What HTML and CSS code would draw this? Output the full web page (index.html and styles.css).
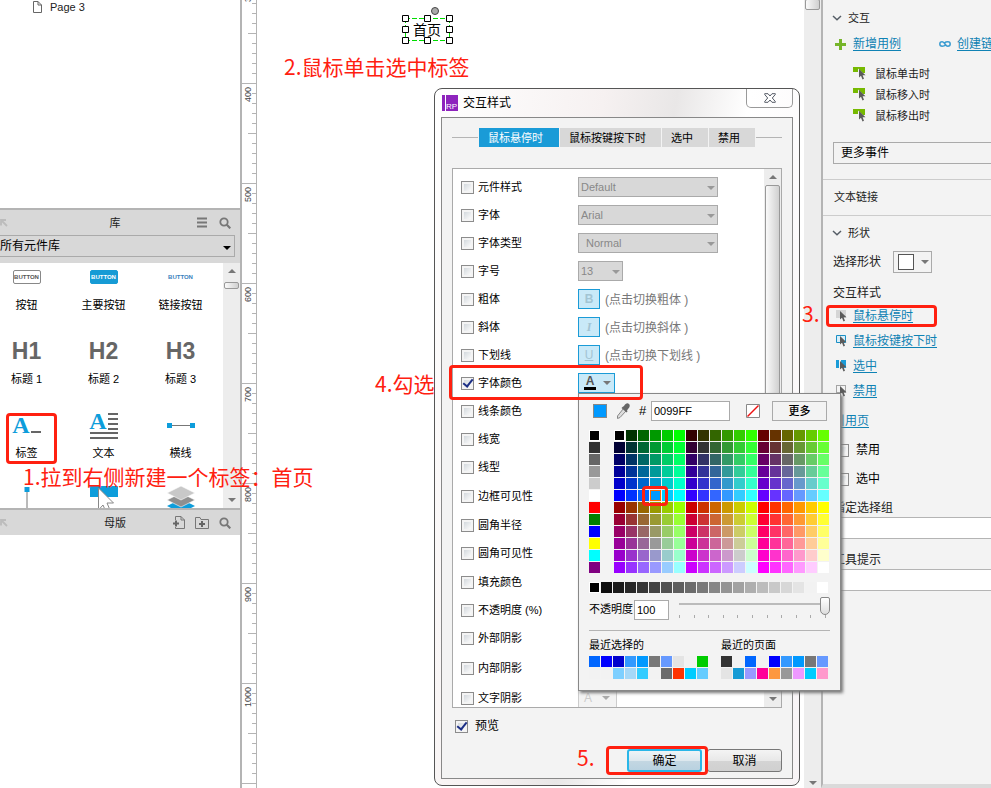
FILE: index.html
```html
<!DOCTYPE html>
<html lang="zh-CN">
<head>
<meta charset="utf-8">
<title>交互样式</title>
<link rel="stylesheet" href="styles.css">
</head>
<body>
<svg class="defs" aria-hidden="true">
  <symbol id="i-search" viewBox="0 0 12 12"><circle cx="5" cy="5" r="3.7" fill="none" stroke="#777" stroke-width="1.8"/><path d="M7.8 7.8 11.3 11.3" stroke="#777" stroke-width="2.2"/></symbol>
  <symbol id="i-dock" viewBox="0 0 8 8"><path d="M1 6.500V1H6M1.500 1.500 7 7" fill="none" stroke="#bcbcbc" stroke-width="1.800"/></symbol>
  <symbol id="i-chevron" viewBox="0 0 10 6"><path d="M1 1 5 4.700 9 1" fill="none" stroke="#555d66" stroke-width="1.500"/></symbol>
  <symbol id="i-pointer" viewBox="0 0 7 11"><path d="M0 0V8.500L2 6.800 3.500 10.500 5 9.800 3.600 6.300H6.500Z" fill="#5b5b5b"/></symbol>
  <symbol id="i-event" viewBox="0 0 13 13"><path d="M0 0H12V6H10L5 1.500V5H0Z" fill="#76b900"/><use href="#i-pointer" x="6" y="2" width="7" height="11"/></symbol>
</svg>
<div class="app">
  <aside class="left">
    <section class="pages">
      <div class="page-item"><svg width="10" height="12" viewBox="0 0 10 12"><path d="M1.500.5H6L9.500 4V11.500H1.500ZM6 .5V4H9.500" fill="#fff" stroke="#666"/></svg><span>Page 3</span></div>
    </section>
    <section class="library">
      <header class="pane-head">
        <svg class="dock" width="8" height="8"><use href="#i-dock"/></svg><h2>库</h2>
        <span class="tools"><svg width="10" height="11" viewBox="0 0 10 11"><path d="M0 1.500H10M0 5.500H10M0 9.500H10" stroke="#777" stroke-width="2"/></svg><svg width="12" height="12"><use href="#i-search"/></svg></span>
      </header>
      <div class="lib-select"><select aria-label="元件库"><option>所有元件库</option></select></div>
      <div class="lib-body">
        <div class="widgets">
          <figure><div class="ico"><span class="wb">BUTTON</span></div><figcaption>按钮</figcaption></figure>
          <figure><div class="ico"><span class="wb primary">BUTTON</span></div><figcaption>主要按钮</figcaption></figure>
          <figure><div class="ico"><span class="wb link">BUTTON</span></div><figcaption>链接按钮</figcaption></figure>
          <figure><div class="ico head">H1</div><figcaption>标题 1</figcaption></figure>
          <figure><div class="ico head">H2</div><figcaption>标题 2</figcaption></figure>
          <figure><div class="ico head">H3</div><figcaption>标题 3</figcaption></figure>
          <figure><div class="ico serif"><span>A</span><svg width="10" height="20" viewBox="0 0 10 20"><path d="M0 17H10" stroke="#666" stroke-width="2"/></svg></div><figcaption>标签</figcaption></figure>
          <figure><div class="ico text-ico"><div class="serif"><span>A</span><svg width="10" height="20" viewBox="0 0 10 20"><path d="M0 3H10M0 8H10M0 13H10M0 18H10" stroke="#666" stroke-width="2"/></svg></div><svg width="28" height="8" viewBox="0 0 28 8"><path d="M0 2H28M0 7H28" stroke="#666" stroke-width="2"/></svg></div><figcaption>文本</figcaption></figure>
          <figure><div class="ico"><svg width="28" height="5" viewBox="0 0 28 5"><path d="M4 2.500H24" stroke="#777"/><path d="M0 0H5V5H0ZM23 0H28V5H23Z" fill="#0d9ddb"/></svg></div><figcaption>横线</figcaption></figure>
          <figure><div class="ico"><svg width="6" height="24" viewBox="0 0 6 24"><path d="M3 4V24" stroke="#777"/><path d="M.5 0H5.500V5H.5Z" fill="#0d9ddb"/></svg></div></figure>
          <figure><div class="ico"><svg width="28" height="26" viewBox="0 0 28 26"><path d="M0 0H28V11H0Z" fill="#0d9ddb"/><path d="M8.500 2V24L13 19 16 26 20 24 17 17H23.500Z" fill="#fff" stroke="#888"/></svg></div></figure>
          <figure><div class="ico"><svg width="28" height="26" viewBox="0 0 28 26"><path d="M0 20 14 13 28 20 14 27Z" fill="#0d9ddb"/><path d="M0 14 14 7 28 14 14 21Z" fill="#8f8f8f" stroke="#fff" stroke-width=".6"/><path d="M0 7 14 0 28 7 14 14Z" fill="#c8c8c8" stroke="#fff" stroke-width=".6"/></svg></div></figure>
        </div>
        <div class="scroll"><i class="up"></i><b class="mini"></b><i class="down"></i></div>
      </div>
    </section>
    <section class="masters">
      <header class="pane-head">
        <svg class="dock" width="8" height="8"><use href="#i-dock"/></svg><h2>母版</h2>
        <span class="tools"><svg width="12" height="13" viewBox="0 0 12 13"><path d="M2.500 4V.5H8L11.500 4V12.500H2.500V11M8 .5V4H11.500" fill="none" stroke="#777"/><path d="M0 7.500H6M3 4.500V10.500" stroke="#666" stroke-width="2"/></svg><svg width="14" height="12" viewBox="0 0 14 12"><path d="M.5 11.500V.5H5L6 2.500H13.500V11.500Z" fill="none" stroke="#777"/><path d="M4 7H10M7 4V10" stroke="#666" stroke-width="2"/></svg><svg width="12" height="12"><use href="#i-search"/></svg></span>
      </header>
    </section>
  </aside>

  <div class="ruler"><div class="marks"><span>300</span><span>400</span><span>500</span><span>600</span><span>700</span><span>800</span><span>900</span><span>1000</span><span></span></div></div>

  <main class="canvas">
    <div class="label-widget">首页
      <svg width="52" height="36" viewBox="0 0 52 36"><path d="M4 11.500H48M4 33.500H48M4.500 11V33M48.500 11V33" fill="none" stroke="#0d0" stroke-dasharray="5 2"/><g fill="#fff" stroke="#000"><path d="M1.500 8.500h6v6h-6zM23.500 8.500h6v6h-6zM45.500 8.500h6v6h-6zM1.500 19.500h6v6h-6zM45.500 19.500h6v6h-6zM1.500 30.500h6v6h-6zM23.500 30.500h6v6h-6zM45.500 30.500h6v6h-6z"/><circle cx="34" cy="4" r="3.500" fill="#aaa" stroke="#444"/></g></svg>
    </div>
  </main>
  <div class="scroll canvas-scroll"><b class="top-thumb"></b><i class="down"></i></div>

  <aside class="right">
    <section class="block">
      <h3><svg width="10" height="6"><use href="#i-chevron"/></svg>交互</h3>
      <div class="links">
        <svg width="11" height="11" viewBox="0 0 11 11"><path d="M0 5.500H11M5.500 0V11" stroke="#76b52a" stroke-width="3"/></svg><a href="#">新增用例</a>
        <svg class="chain" width="12" height="6" viewBox="0 0 12 6"><path d="M6.500 4C5.500 5 4.500 5.200 3.200 5.200 0 5.200 0 .8 3.200.8 6 .8 6 5.200 8.800 5.200 12 5.200 12 .8 8.800.8 7.500.8 6.500 1 5.500 2" fill="none" stroke="#3a9bd0" stroke-width="1.500"/></svg><a href="#">创建链接</a>
      </div>
      <ul class="events">
        <li><svg width="13" height="13"><use href="#i-event"/></svg>鼠标单击时</li>
        <li><svg width="13" height="13"><use href="#i-event"/></svg>鼠标移入时</li>
        <li><svg width="13" height="13"><use href="#i-event"/></svg>鼠标移出时</li>
      </ul>
      <select class="more-events" aria-label="更多事件"><option>更多事件</option></select>
    </section>
    <section class="text-link">文本链接</section>
    <section class="block shape">
      <h3><svg width="10" height="6"><use href="#i-chevron"/></svg>形状</h3>
      <div class="pick"><span>选择形状</span><button type="button" class="shape-btn" aria-label="选择形状"><span></span><i></i></button></div>
      <h4>交互样式</h4>
      <ul class="states">
        <li><svg width="12" height="13" viewBox="0 0 12 13"><path d="M0 1H10V9H0Z" fill="#d5d5d5"/><use href="#i-pointer" x="4" y="2" width="7" height="11"/></svg><a href="#">鼠标悬停时</a></li>
        <li><svg width="12" height="13" viewBox="0 0 12 13"><path d="M.5 1.500H9.500V8.500H.5Z" fill="#d7eef9" stroke="#1a8fc4"/><use href="#i-pointer" x="4" y="2" width="7" height="11"/></svg><a href="#">鼠标按键按下时</a></li>
        <li><svg width="12" height="13" viewBox="0 0 12 13"><path d="M0 1H10V9H0Z" fill="#1a9bd7"/><path d="M3 1H5V9H3Z" fill="#f3f3f3"/><use href="#i-pointer" x="4" y="2" width="7" height="11"/></svg><a href="#">选中</a></li>
        <li><svg width="12" height="13" viewBox="0 0 12 13"><path d="M.5 1.500H9.500V8.500H.5Z" fill="none" stroke="#555" stroke-dasharray="1 1"/><use href="#i-pointer" x="4" y="2" width="7" height="11"/></svg><a href="#">禁用</a></li>
      </ul>
      <a class="ref" href="#">引用页</a>
      <label class="opt"><input type="checkbox">禁用</label>
      <label class="opt"><input type="checkbox">选中</label>
      <label class="field" for="grp">指定选择组</label><input class="wide" id="grp" type="text">
      <label class="field tip" for="tip">工具提示</label><input class="wide" id="tip" type="text">
    </section>
  </aside>

  <div class="dialog" role="dialog" aria-label="交互样式">
    <header class="title"><span class="logo">RP</span><h1>交互样式</h1>
      <button type="button" class="close" aria-label="关闭"><svg width="12" height="10" viewBox="0 0 12 10"><path d="M.7.700H4L6 3 8 .7H11.300V1.500L8.300 5 11.300 8.500V9.300H8L6 7 4 9.300H.7V8.500L3.700 5 .7 1.500Z" fill="#fff" stroke="#555b66"/></svg></button></header>
    <div class="panel">
      <nav class="tabs"><button type="button" class="on">鼠标悬停时</button><button type="button">鼠标按键按下时</button><button type="button">选中</button><button type="button">禁用</button></nav>
      <div class="list">
        <div class="rows">
          <div class="row"><label><input type="checkbox">元件样式</label><span class="sel"><select disabled aria-label="元件样式"><option>Default</option></select></span></div>
          <div class="row"><label><input type="checkbox">字体</label><span class="sel"><select disabled aria-label="字体"><option>Arial</option></select></span></div>
          <div class="row"><label><input type="checkbox">字体类型</label><span class="sel indent"><select disabled aria-label="字体类型"><option>Normal</option></select></span></div>
          <div class="row"><label><input type="checkbox">字号</label><span class="sel small"><select disabled aria-label="字号"><option>13</option></select></span></div>
          <div class="row"><label><input type="checkbox">粗体</label><button type="button" class="tog bold">B</button><span class="hint">(点击切换粗体 )</span></div>
          <div class="row"><label><input type="checkbox">斜体</label><button type="button" class="tog italic">I</button><span class="hint">(点击切换斜体 )</span></div>
          <div class="row"><label><input type="checkbox">下划线</label><button type="button" class="tog under">U</button><span class="hint">(点击切换下划线 )</span></div>
          <div class="row"><label><input type="checkbox" checked>字体颜色</label><button type="button" class="tog color"><span>A</span><i></i></button></div>
          <div class="row"><label><input type="checkbox">线条颜色</label></div>
          <div class="row"><label><input type="checkbox">线宽</label></div>
          <div class="row mid"><label><input type="checkbox">线型</label></div>
          <div class="row mid"><label><input type="checkbox">边框可见性</label></div>
          <div class="row"><label><input type="checkbox">圆角半径</label></div>
          <div class="row mid"><label><input type="checkbox">圆角可见性</label></div>
          <div class="row"><label><input type="checkbox">填充颜色</label></div>
          <div class="row"><label><input type="checkbox">不透明度 (%)</label></div>
          <div class="row tall"><label><input type="checkbox">外部阴影</label></div>
          <div class="row tall"><label><input type="checkbox">内部阴影</label></div>
          <div class="row"><label><input type="checkbox">文字阴影</label><button type="button" class="tog off" disabled><span>A</span><i></i></button></div>
        </div>
        <div class="scroll"><i class="up"></i><b class="long"></b><i class="down"></i></div>
      </div>
      <label class="preview"><input type="checkbox" checked>预览</label>
      <footer><button type="button" class="ok">确定</button><button type="button">取消</button></footer>
    </div>

    <div class="picker">
      <div class="bar">
        <span class="current"></span>
        <svg class="dropper" width="14" height="16" viewBox="0 0 14 16"><path d="M7.500 5.500 10 8 4 14.500 1.500 15.500 1.500 13Z" fill="#ddd" stroke="#888"/><path d="M6.500 4 8 3C9.500.5 11.500-.5 13 1S13.500 4.500 12 6L11 7.500 11.500 8.500 10.500 9.500 5.500 5Z" fill="#666"/></svg>
        <label for="hex">#</label><input id="hex" type="text" value="0099FF">
        <svg class="nofill" width="14" height="14" viewBox="0 0 14 14"><path d="M.5.5H13.500V13.500H.5Z" fill="#fff" stroke="#888"/><path d="M1.500 12.500 12.500 1.500" stroke="#e11" stroke-width="1.500"/></svg>
        <button type="button">更多</button>
      </div>
      <div class="palette"><div class="sw" id="basic"></div><div class="sw" id="web"></div></div>
      <div class="sw" id="greys"></div>
      <div class="opacity"><label for="op">不透明度</label><input id="op" type="text" value="100">
        <div class="slide"><input type="range" min="0" max="100" value="100" aria-label="不透明度"><div class="ticks"><i></i><i></i><i></i><i></i><i></i><i></i><i></i><i></i><i></i><i></i><i></i></div></div></div>
      <div class="recents">
        <div><h5>最近选择的</h5><div class="sw" id="recent"></div></div>
        <div><h5>最近的页面</h5><div class="sw" id="paged"></div></div>
      </div>
    </div>
  </div>

  <p class="note n1">1.拉到右侧新建一个标签<span class="colon">：</span>首页</p>
  <p class="note n2">2.鼠标单击选中标签</p>
  <p class="note n3">3.</p>
  <p class="note n4">4.勾选</p>
  <p class="note n5">5.</p>
  <div class="mark m1"></div><div class="mark m2"></div><div class="mark m3"></div><div class="mark m4"></div><div class="mark m5"></div>
</div>
<script src="script.js"></script>
</body>
</html>
```
FILE: styles.css
```css
* { box-sizing: border-box; }
body, h1, h2, h3, h4, h5, p, ul, figure { margin: 0; padding: 0; font-weight: normal; }
ul { list-style: none; }
body { font: 12px/16px "Liberation Sans", "Noto Sans CJK SC", sans-serif; color: #222; background: #fff; overflow: hidden; }
button, input, select { font: inherit; color: inherit; margin: 0; padding: 0; border-radius: 0; }
svg { display: block; flex: none; }
.defs { position: absolute; width: 0; height: 0; }
a { color: #0f82b4; text-decoration: underline; text-underline-offset: 2px; }
select { appearance: none; }

.app { position: relative; display: grid; grid-template-columns: 240px 17px 1fr 17px 170px; height: 100vh; overflow: hidden; }

/* Left side panes */
.left { display: grid; grid-template-rows: 208px 300px 1fr; min-height: 0; }
.page-item { display: flex; align-items: center; gap: 8px; padding-left: 32px; font-size: 11px; height: 14px; }
.library { border-top: 2px solid #b4b4b4; display: flex; flex-direction: column; background: #d8d8d8; overflow: hidden; }
.masters { border-top: 2px solid #b4b4b4; }
.pane-head { position: relative; display: flex; align-items: center; height: 25px; background: #d8d8d8; font-size: 11px; }
.pane-head h2 { flex: 1; font-size: 11px; text-align: center; padding-left: 74px; }
.tools { display: flex; align-items: center; justify-content: flex-end; gap: 12px; width: 92px; padding-right: 9px; }
.masters .tools { gap: 10px; }
.lib-select { position: relative; height: 28px; padding-right: 5px; }
.lib-select select { width: 100%; height: 22px; background: #d8d8d8; border: 1px solid #aaa; border-left: 0; color: #000; }
.lib-select::after { content: ""; position: absolute; right: 9px; top: 11px; border: 4px solid transparent; border-top-color: #000; border-bottom: 0; }
.lib-body { display: flex; flex: 1; min-height: 0; background: #fff; overflow: hidden; }
.widgets { flex: 1; display: grid; grid-template-columns: repeat(3, 77px); grid-auto-rows: 74px; margin-left: -12px; }
.widgets figure { display: flex; flex-direction: column; align-items: center; }
.ico { display: flex; align-items: center; justify-content: center; height: 28px; margin-bottom: 6px; overflow: visible; }
figcaption { font-size: 11px; color: #000; }
.wb { font: bold 6px/12px "Liberation Sans", sans-serif; width: 28px; border: 1px solid #888; border-radius: 2px; color: #555; white-space: nowrap; display: flex; justify-content: center; }
.wb.primary { background: #169bd5; border-color: #169bd5; color: #fff; }
.wb.link { border-color: transparent; color: #3a7fbd; }
.head { font-size: 23px; font-weight: bold; color: #666; }
.serif { display: flex; align-items: center; justify-content: center; gap: 1px; color: #0d9ddb; font: bold 24px/20px "Liberation Serif", serif; }
.text-ico { flex-direction: column; }

/* Scroll bars */
.scroll { position: relative; width: 17px; flex: none; display: flex; flex-direction: column; align-items: center; background: #ededed; }
.scroll i { flex: none; border: 4px solid transparent; width: 0; height: 0; }
.scroll .up { border-bottom-color: #777; border-top: 0; margin: 6px 0; }
.scroll .down { border-top-color: #777; border-bottom: 0; margin: auto 0 6px; }
.canvas-scroll .down { margin-bottom: 3px; }
.scroll b { width: 15px; border: 1px solid #999; border-radius: 2px; background: linear-gradient(90deg, #fafafa, #d0d0d0); }
.mini { height: 7px; margin-top: 3px; }
.long { height: 330px; }
.top-thumb { height: 11px; margin-top: -1px; }

/* Ruler */
.ruler { border-left: 2px solid #b4b4b4; border-right: 1px solid #b4b4b4; overflow: hidden; }
.marks { margin-top: -17px; }
.marks span { display: block; width: 14px; height: 100px; padding: 0 2px 4px 0; writing-mode: vertical-rl; transform: rotate(180deg); text-align: right; font-size: 9px; line-height: 9px; color: #444;
  background: linear-gradient(#b4b4b4, #b4b4b4) 0 100%/14px 1px no-repeat, linear-gradient(#b4b4b4, #b4b4b4) 0 49px/8px 1px no-repeat, repeating-linear-gradient(0deg, #b4b4b4 0 1px, transparent 1px 10px) 0 0/4px 100px no-repeat; }

/* Canvas */
.canvas { position: relative; background: #fff; }
.label-widget { position: absolute; left: 156px; top: 20px; font-size: 14px; line-height: 20px; color: #000; }
.label-widget svg { position: absolute; left: -12px; top: -13px; overflow: visible; }

/* Inspector */
.right { border-left: 2px solid #b4b4b4; background: #f3f3f3; overflow: hidden; white-space: nowrap; border-bottom: 4px solid #dadada; }
.block { padding: 10px 0 0 10px; height: 180px; border-bottom: 1px solid #ccc; }
h3 { display: flex; align-items: center; gap: 6px; font-size: 11px; height: 16px; }
h3 svg { margin-left: -1px; }
.links { display: flex; align-items: center; margin-top: 10px; }
.links svg { margin: 0 7px 0 2px; }
.links .chain { margin: 0 6px 0 38px; }
.events { margin: 11px 0 0 20px; font-size: 11px; }
.events li { display: flex; align-items: center; gap: 9px; height: 21px; }
.more-events { width: 200px; height: 22px; margin-top: 16px; padding: 0 7px; border: 1px solid #aaa; background: #f3f3f3; color: #000; }
.text-link { height: 36px; padding: 9px 0 0 11px; font-size: 11px; border-bottom: 1px solid #ccc; }
.shape { height: auto; border: 0; padding-top: 9px; }
.pick { display: flex; align-items: center; gap: 12px; margin: 10px 0; }
.shape-btn { display: flex; align-items: center; gap: 7px; width: 39px; height: 22px; padding-left: 4px; border: 1px solid #aaa; background: #f3f3f3; }
.shape-btn span { width: 16px; height: 16px; background: #fff; border: 1px solid #555; }
.shape-btn i, .tog i { border: 4px solid transparent; border-top-color: #777; border-bottom: 0; }
h4 { font-size: 12px; height: 20px; line-height: 20px; }
.states li { display: flex; align-items: center; gap: 5px; height: 25px; padding-left: 3px; }
.ref { display: block; margin: 10px 0 13px; }
.opt { display: flex; align-items: center; gap: 7px; height: 16px; padding-left: 3px; margin-bottom: 13px; color: #000; }
.field { display: block; height: 17px; }
.wide { display: block; width: 200px; height: 22px; border: 1px solid #b4b4b4; background: #fff; }
.tip { margin-top: 13px; }

input[type=checkbox] { appearance: none; flex: none; width: 13px; height: 13px; border: 1px solid #8c8c8c; background: linear-gradient(135deg, #c8cfd5, #fafafa 80%); box-shadow: inset 0 0 0 2px #f4f4f4; display: grid; place-items: center; }
input[type=checkbox]:checked::before { content: ""; width: 4px; height: 8px; border: solid #1c2f86; border-width: 0 2px 2px 0; transform: rotate(38deg); margin-top: -2px; }

/* Dialog */
.dialog { position: absolute; left: 434px; top: 88px; width: 366px; padding: 0 6px 6px; border: 1px solid #555; border-radius: 8px; background: linear-gradient(100deg, #fff, #f6f1f1 35%, #e9e7e7 50%, #fff 65%, #f8f4f6); color: #000; }
.title { display: flex; align-items: center; gap: 5px; height: 28px; padding-left: 1px; }
.title h1 { font-size: 12px; flex: 1; }
.logo { width: 16px; height: 16px; background: linear-gradient(90deg, #8e24bd 3px, #fff 3px 4px, #8e24bd 4px); color: #fff; font: 8px/9px "Liberation Sans", sans-serif; padding: 7px 0 0 4px; }
.close { align-self: flex-start; display: grid; place-items: center; width: 47px; height: 19px; border: 1px solid #999; border-top: 0; border-radius: 0 0 5px 5px; background: transparent; }
.panel { border: 1px solid #888; background: #f3f3f3; padding: 10px 10px 6px; height: 662px; }
.tabs { display: flex; gap: 1px; padding-left: 27px; height: 19px; background: linear-gradient(#b4b4b4, #b4b4b4) 0 9px/100% 1px no-repeat; }
.tabs button { border: 0; background: #d8d8d8; font-size: 11px; padding: 0 0 0 9px; width: 46px; text-align: left; box-shadow: 0 0 0 1px #f3f3f3; white-space: nowrap; }
.tabs button:nth-child(2) { width: 101px; }
.tabs .on { background: #1a9bd7; color: #fff; width: 80px; }
.list { display: flex; height: 540px; margin-top: 21px; border: 1px solid #aaa; background: #fff; overflow: hidden; }
.rows { flex: 1; padding: 4px 0 0 8px; }
.row { display: flex; align-items: flex-start; height: 28px; }
.row.mid { height: 29px; }
.row.tall { height: 30px; }
.row label { display: flex; align-items: center; gap: 4px; width: 117px; height: 28px; font-size: 11px; white-space: nowrap; }
.sel { position: relative; width: 140px; height: 20px; margin-top: 4px; }
.sel.small { width: 45px; }
.sel select { width: 100%; height: 20px; border: 1px solid #aaa; background: #d8d8d8; color: #888; padding: 0 2px; font-size: 11px; opacity: 1; }
.sel.indent select { padding-left: 7px; }
.sel::after { content: ""; position: absolute; right: 3px; top: 9px; border: 4px solid transparent; border-top-color: #999; border-bottom: 0; }
.tog { width: 22px; height: 20px; margin-top: 4px; border: 1px solid #1a9bd7; background: #c9e9f8; color: #a3c4d3; font-size: 12px; line-height: 16px; }
.bold { font-weight: bold; }
.italic { font: italic bold 12px/16px "Liberation Serif", serif; }
.under { text-decoration: underline; }
.hint { margin: 7px 0 0 5px; color: #777; white-space: nowrap; }
.tog.color, .tog.off { display: flex; align-items: center; gap: 7px; width: 37px; padding-left: 5px; }
.tog.color span { width: 12px; border-bottom: 3px solid #000; color: #555; font-weight: bold; line-height: 11px; }
.tog.off { background: #f3f3f3; border-color: #ccc; color: #ccc; width: 39px; gap: 10px; }
.tog.off i { border-top-color: #aaa; }
.preview { display: flex; align-items: center; gap: 7px; height: 16px; margin: 10px 0 0 3px; }
.panel footer { display: flex; justify-content: flex-end; gap: 5px; margin-top: 15px; }
.panel footer button { width: 75px; height: 23px; border: 1px solid #777; border-radius: 3px; background: linear-gradient(#f4f4f4, #e8e8e8 50%, #d4d4d4 51%, #d0d0d0); }
.panel footer .ok { border: 2px solid #29b6e8; background: linear-gradient(#eef4f7, #dde8ee 50%, #c4d7e2 51%, #b9d2e0); }

/* Colour picker */
.picker { position: absolute; z-index: 2; left: 143px; top: 304px; width: 263px; border: 1px solid #888; background: #f3f3f3; padding: 7px 10px 11px; box-shadow: 2px 2px 3px #777; }
.bar { display: flex; align-items: center; height: 20px; margin-bottom: 9px; }
.current { width: 14px; height: 14px; margin-left: 4px; border: 1px solid #888; background: #09f; }
.dropper { margin: 0 9px; }
.bar label { width: 12px; font-size: 13px; }
.bar input { width: 79px; height: 20px; border: 1px solid #aaa; padding-left: 2px; font-size: 11px; }
.nofill { margin: 0 12px 0 16px; }
.bar button { width: 55px; height: 20px; border: 1px solid #aaa; background: #f3f3f3; font-size: 11px; font-weight: 500; }
.palette { display: flex; gap: 14px; margin-bottom: 9px; }
.sw { display: grid; grid-template-columns: repeat(20, 11px); gap: 1px; }
.sw span { height: 11px; }
.sw .edge { border: 1px solid #fff; }
.sw .chosen { border: 1px solid #f60; }
#basic { grid-template-columns: 11px; }
#web { grid-template-columns: repeat(18, 11px); }
#recent { grid-template-columns: repeat(10, 11px); }
#paged { grid-template-columns: repeat(9, 11px); }
.opacity { display: flex; height: 38px; padding-top: 7px; border-bottom: 1px solid #b4b4b4; margin-bottom: 6px; }
.opacity label { width: 45px; font-size: 11px; line-height: 18px; white-space: nowrap; }
.opacity > input { width: 35px; height: 20px; border: 1px solid #aaa; padding-left: 2px; font-size: 11px; }
.slide { flex: 1; margin: -3px 0 0 10px; }
.slide input { appearance: none; display: block; width: 100%; height: 18px; background: linear-gradient(#bbb, #bbb) 0 6px/100% 2px no-repeat; }
.slide input::-webkit-slider-thumb { appearance: none; width: 10px; height: 18px; border: 1px solid #888; border-radius: 2px 2px 5px 5px; background: linear-gradient(#fff, #ddd); }
.ticks { display: flex; justify-content: space-between; padding-right: 4px; }
.ticks i { width: 1px; height: 3px; background: #aaa; }
.recents { display: flex; gap: 13px; }
h5 { font-size: 11px; line-height: 17px; margin-bottom: 2px; }

/* Annotations */
.note { position: absolute; z-index: 3; color: #ff2010; font: 21px/28px "Noto Sans CJK SC", sans-serif; white-space: nowrap; }
.colon { font-family: "Noto Sans CJK TC", sans-serif; }
.n1 { left: 23px; top: 462px; }
.n2 { left: 284px; top: 52px; }
.n3 { left: 802px; top: 299px; }
.n4 { left: 375px; top: 369px; }
.n5 { left: 577px; top: 743px; }
.mark { position: absolute; z-index: 3; border: 3px solid #ff2010; border-radius: 4px; }
.m1 { left: 6px; top: 413px; width: 51px; height: 51px; }
.m2 { left: 826px; top: 305px; width: 111px; height: 22px; }
.m3 { left: 449px; top: 365px; width: 194px; height: 35px; }
.m4 { left: 642px; top: 486px; width: 26px; height: 20px; }
.m5 { left: 606px; top: 746px; width: 102px; height: 29px; }
```
FILE: script.js
```js
function fill(id, colors, classes) {
  const box = document.getElementById(id);
  colors.forEach(function (color, i) {
    const cell = document.createElement("span");
    cell.style.background = color;
    if (classes && classes[i]) cell.className = classes[i];
    box.appendChild(cell);
  });
}

// Web-safe cube: six 6x6 blocks, one per red level; green runs across, blue runs down.
const web = [];
for (let row = 0; row < 12; row++) {
  for (let col = 0; col < 18; col++) {
    const r = (row < 6 ? 0 : 3) + Math.floor(col / 6);
    web.push("rgb(" + [r, col % 6, row % 6].map(function (n) { return n * 51; }).join(",") + ")");
  }
}
const greys = [];
for (let i = 0; i < 20; i++) {
  const v = Math.round(i * 255 / 19);
  greys.push("rgb(" + [v, v, v].join(",") + ")");
}
fill("basic", ["#000", "#333", "#666", "#999", "#ccc", "#fff", "#f00", "#008000", "#00f", "#ff0", "#0ff", "#800080"], { 0: "edge" });
fill("web", web, { 0: "edge", 93: "chosen" });
fill("greys", greys, { 0: "edge" });
fill("recent", ["#06f", "#00f", "#00c", "#39f", "#09f", "#777", "#69f", "#e4e4e4", "#f2f2f2", "#0c0",
  "#f2f2f2", "#f2f2f2", "#7dcfff", "#a5d8f8", "#3cf", "#f2f2f2", "#6b6b6b", "#f30", "#0cf", "#6cf"]);
fill("paged", ["#333", "#f2f2f2", "#06f", "#f2f2f2", "#00f", "#39f", "#09f", "#777", "#69f",
  "#e4e4e4", "#169bd5", "#99f", "#f09", "#fd9840", "#999", "#e9f", "#0cf", "#f9c"]);
```
